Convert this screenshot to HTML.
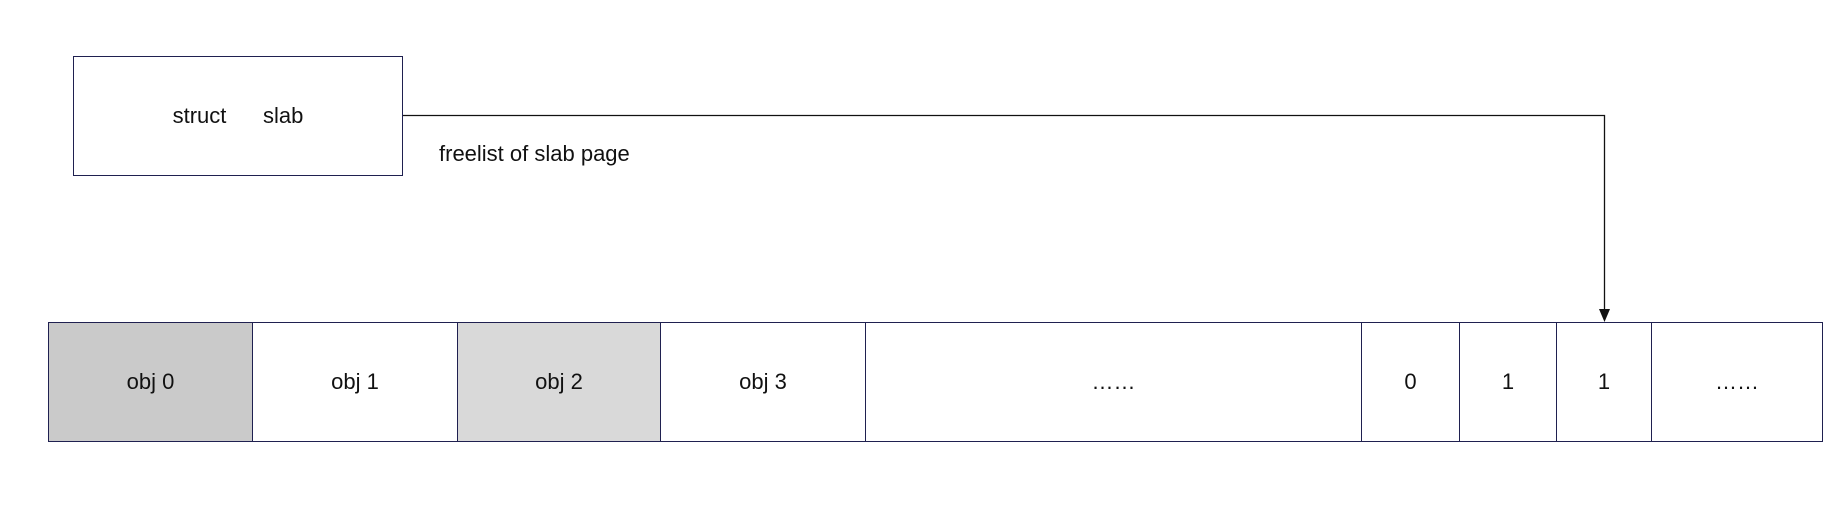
<!DOCTYPE html>
<html><head><meta charset="utf-8"><style>
body{margin:0;width:1844px;height:514px;background:#fff;position:relative;overflow:hidden;font-family:"Liberation Sans","Noto Sans CJK SC",sans-serif;font-size:22px;color:#111}
.b{position:absolute;box-sizing:border-box;border:1.5px solid #1f2050;display:flex;align-items:center;justify-content:center}
.t{position:absolute;white-space:nowrap}
</style></head><body>
<div class="b" style="left:73px;top:56px;width:330px;height:120px;border-width:1px"><span>struct&nbsp;&nbsp;&nbsp;&nbsp;&nbsp; slab</span></div>
<div class="t" style="left:439px;top:141px">freelist of slab page</div>
<svg style="position:absolute;left:0;top:0" width="1844" height="514">
<polyline points="403,115.5 1604.5,115.5 1604.5,310" fill="none" stroke="#111" stroke-width="1.3"/>
<polygon points="1599,309 1610,309 1604.5,322" fill="#111"/>
</svg>
<div class="b" style="left:48px;top:322px;width:205px;height:120px;background:#cacaca">obj 0</div>
<div class="b" style="left:252px;top:322px;width:206px;height:120px">obj 1</div>
<div class="b" style="left:457px;top:322px;width:204px;height:120px;background:#d9d9d9">obj 2</div>
<div class="b" style="left:660px;top:322px;width:206px;height:120px">obj 3</div>
<div class="b" style="left:865px;top:322px;width:497px;height:120px">……</div>
<div class="b" style="left:1361px;top:322px;width:99px;height:120px">0</div>
<div class="b" style="left:1459px;top:322px;width:98px;height:120px">1</div>
<div class="b" style="left:1556px;top:322px;width:96px;height:120px">1</div>
<div class="b" style="left:1651px;top:322px;width:172px;height:120px">……</div>
</body></html>
